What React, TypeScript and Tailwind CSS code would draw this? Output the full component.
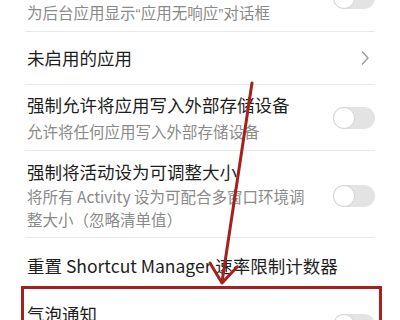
import React from 'react'

const font = { fontFamily: '"Noto Sans CJK SC", "Noto Sans", sans-serif' }

function Toggle() {
  return (
    <div className="relative h-[22px] w-[42px] shrink-0 rounded-full bg-[#e3e3e3]">
      <div className="absolute left-0 top-0 h-[22px] w-[22px] rounded-full border border-[#d3d3d3] bg-white" />
    </div>
  )
}

function Chevron() {
  return (
    <svg width="12" height="16" viewBox="0 0 12 16" className="mr-[4px] shrink-0">
      <path d="M3 1.5 L9 8 L3 14.5" fill="none" stroke="#9a9a9a" strokeWidth="1.4" />
    </svg>
  )
}

// latin quote marks, narrow as in the screenshot
function Q({ c }: { c: string }) {
  return <span className="font-['Liberation_Sans',sans-serif]">{c}</span>
}

export default function App() {
  return (
    <div className="relative h-[320px] w-[400px] overflow-hidden bg-white" style={font}>
      <div className="-mt-[33px]">
        {/* row 0, scrolled off the top */}
        <div className="mx-[25px] flex items-center border-b border-[#e8e8e8] pt-[9px] pb-[6px]">
          <div className="flex-1 pl-[2px]">
            <div className="text-[17.5px] leading-[24px] text-[#1e1e1e]">显示所有“应用无响应”</div>
            <div className="mt-[1px] text-[15.5px] leading-[23px] text-[#8a8a8a]">
              为后台应用显示<Q c="“" />应用无响应<Q c="”" />对话框
            </div>
          </div>
          <div className="-mt-[6px]">
            <Toggle />
          </div>
        </div>

        {/* row 1 */}
        <div className="mx-[25px] flex h-[53px] items-center border-b border-[#e8e8e8]">
          <div className="flex-1 pl-[2px] text-[17.5px] leading-[24px] text-[#1e1e1e]">未启用的应用</div>
          <Chevron />
        </div>

        {/* row 2 */}
        <div className="mx-[25px] flex items-center border-b border-[#e8e8e8] pt-[8px] pb-[7px]">
          <div className="flex-1 pl-[2px]">
            <div className="text-[17.5px] leading-[24px] text-[#1e1e1e]">强制允许将应用写入外部存储设备</div>
            <div className="mt-[3px] text-[15.5px] leading-[23px] text-[#8a8a8a]">允许将任何应用写入外部存储设备</div>
          </div>
          <Toggle />
        </div>

        {/* row 3 */}
        <div className="mx-[25px] flex items-center border-b border-[#e8e8e8] pt-[9px] pb-[6px]">
          <div className="flex-1 pl-[2px]">
            <div className="text-[17.5px] leading-[24px] text-[#1e1e1e]">强制将活动设为可调整大小</div>
            <div className="mt-[1px] w-[280px] text-[15.5px] leading-[23px] text-[#8a8a8a]">
              将所有 Activity 设为可配合多窗口环境调整大小（忽略清单值）
            </div>
          </div>
          <Toggle />
        </div>

        {/* row 4 */}
        <div className="mx-[25px] flex items-center border-b border-[#e8e8e8] pt-[16px] pb-[10px]">
          <div className="flex-1 pl-[2px] text-[17.5px] leading-[24px] text-[#1e1e1e]">重置 Shortcut Manager 速率限制计数器</div>
        </div>

        {/* row 5 */}
        <div className="mx-[25px] flex h-[72px] items-center">
          <div className="flex-1 self-start pt-[13px] pl-[2px] text-[17.5px] leading-[24px] text-[#1e1e1e]">气泡通知</div>
          <Toggle />
        </div>
      </div>

      {/* annotation: red box */}
      <div className="absolute left-[21px] top-[286px] h-[60px] w-[361px] border-[3px] border-[#a3221e]" />

      {/* annotation: arrow */}
      <svg className="absolute left-0 top-0" width="400" height="320" viewBox="0 0 400 320">
        <path d="M252 83 L222 282" stroke="#a3221e" strokeWidth="3" fill="none" strokeLinecap="round" />
        <path d="M210 263 L222 283 L237 267" stroke="#a3221e" strokeWidth="3" fill="none" strokeLinecap="round" strokeLinejoin="round" />
      </svg>
    </div>
  )
}
